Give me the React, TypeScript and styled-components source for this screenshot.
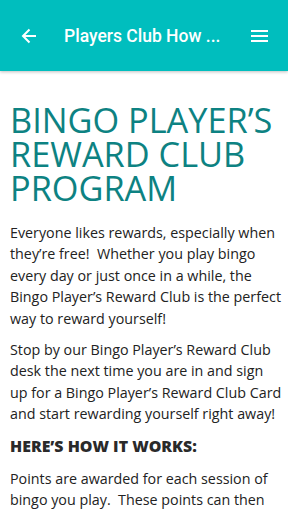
import React from "react";
import styled, { createGlobalStyle } from "styled-components";

const Global = createGlobalStyle`
  html, body { margin: 0; padding: 0; background: #fff; }
  body { width: 288px; height: 512px; overflow: hidden; }
`;

const Page = styled.div`
  width: 288px;
  height: 512px;
  overflow: hidden;
  display: flex;
  flex-direction: column;
`;

const Toolbar = styled.header`
  height: 71px;
  flex: none;
  background: #00bebe;
  display: flex;
  align-items: center;
  box-shadow: 0 1px 3px rgba(0, 0, 0, 0.25);
  position: relative;
  z-index: 1;
`;

const IconButton = styled.div`
  width: 56px;
  height: 71px;
  display: flex;
  align-items: center;
  justify-content: center;
  flex: none;
`;

const Title = styled.div`
  flex: 1;
  font-family: Roboto, "Liberation Sans", sans-serif;
  font-weight: 500;
  font-size: 17.5px;
  color: #fff;
  white-space: nowrap;
  padding-left: 8px;
`;

const Content = styled.main`
  padding: 0 4px 0 10px;
  font-family: "Open Sans", "Liberation Sans", sans-serif;
`;

const Heading = styled.h1`
  margin: 32px 0 17px;
  font-weight: 400;
  font-size: 34.3px;
  line-height: 34px;
  color: #0d8282;
`;

const Para = styled.p`
  margin: 0 0 10px;
  font-size: 14.3px;
  line-height: 21.4px;
  color: #222;
`;

const SubHeading = styled.h2`
  margin: 0 0 11px;
  font-size: 15.9px;
  font-weight: 800;
  line-height: 22px;
  color: #2a2a2a;
`;

export default function App() {
  return (
    <Page>
      <Global />
      <Toolbar>
        <IconButton>
          <svg width="16" height="16" viewBox="0 0 16 16" style={{ marginLeft: 2 }}>
            <path d="M15 8H2M8.5 1.5L2 8l6.5 6.5" stroke="#fff" strokeWidth="2" fill="none" />
          </svg>
        </IconButton>
        <Title>Players Club How ...</Title>
        <IconButton>
          <svg width="17" height="12" viewBox="0 0 17 12" style={{ marginRight: 2 }}>
            <rect x="0" y="0" width="17" height="2" fill="#fff" />
            <rect x="0" y="5" width="17" height="2" fill="#fff" />
            <rect x="0" y="10" width="17" height="2" fill="#fff" />
          </svg>
        </IconButton>
      </Toolbar>
      <Content>
        <Heading>BINGO PLAYER’S REWARD CLUB PROGRAM</Heading>
        <Para>
          Everyone likes rewards, especially when they’re free!&nbsp; Whether you play bingo every day or just once in a
          while, the Bingo Player’s Reward Club is the perfect way to reward yourself!
        </Para>
        <Para>
          Stop by our Bingo Player’s Reward Club desk the next time you are in and sign up for a Bingo Player’s Reward
          Club Card and start rewarding yourself right away!
        </Para>
        <SubHeading>HERE’S HOW IT WORKS:</SubHeading>
        <Para>
          Points are awarded for each session of bingo you play.&nbsp; These points can then be exchanged for great
          rewards and prizes.
        </Para>
      </Content>
    </Page>
  );
}
